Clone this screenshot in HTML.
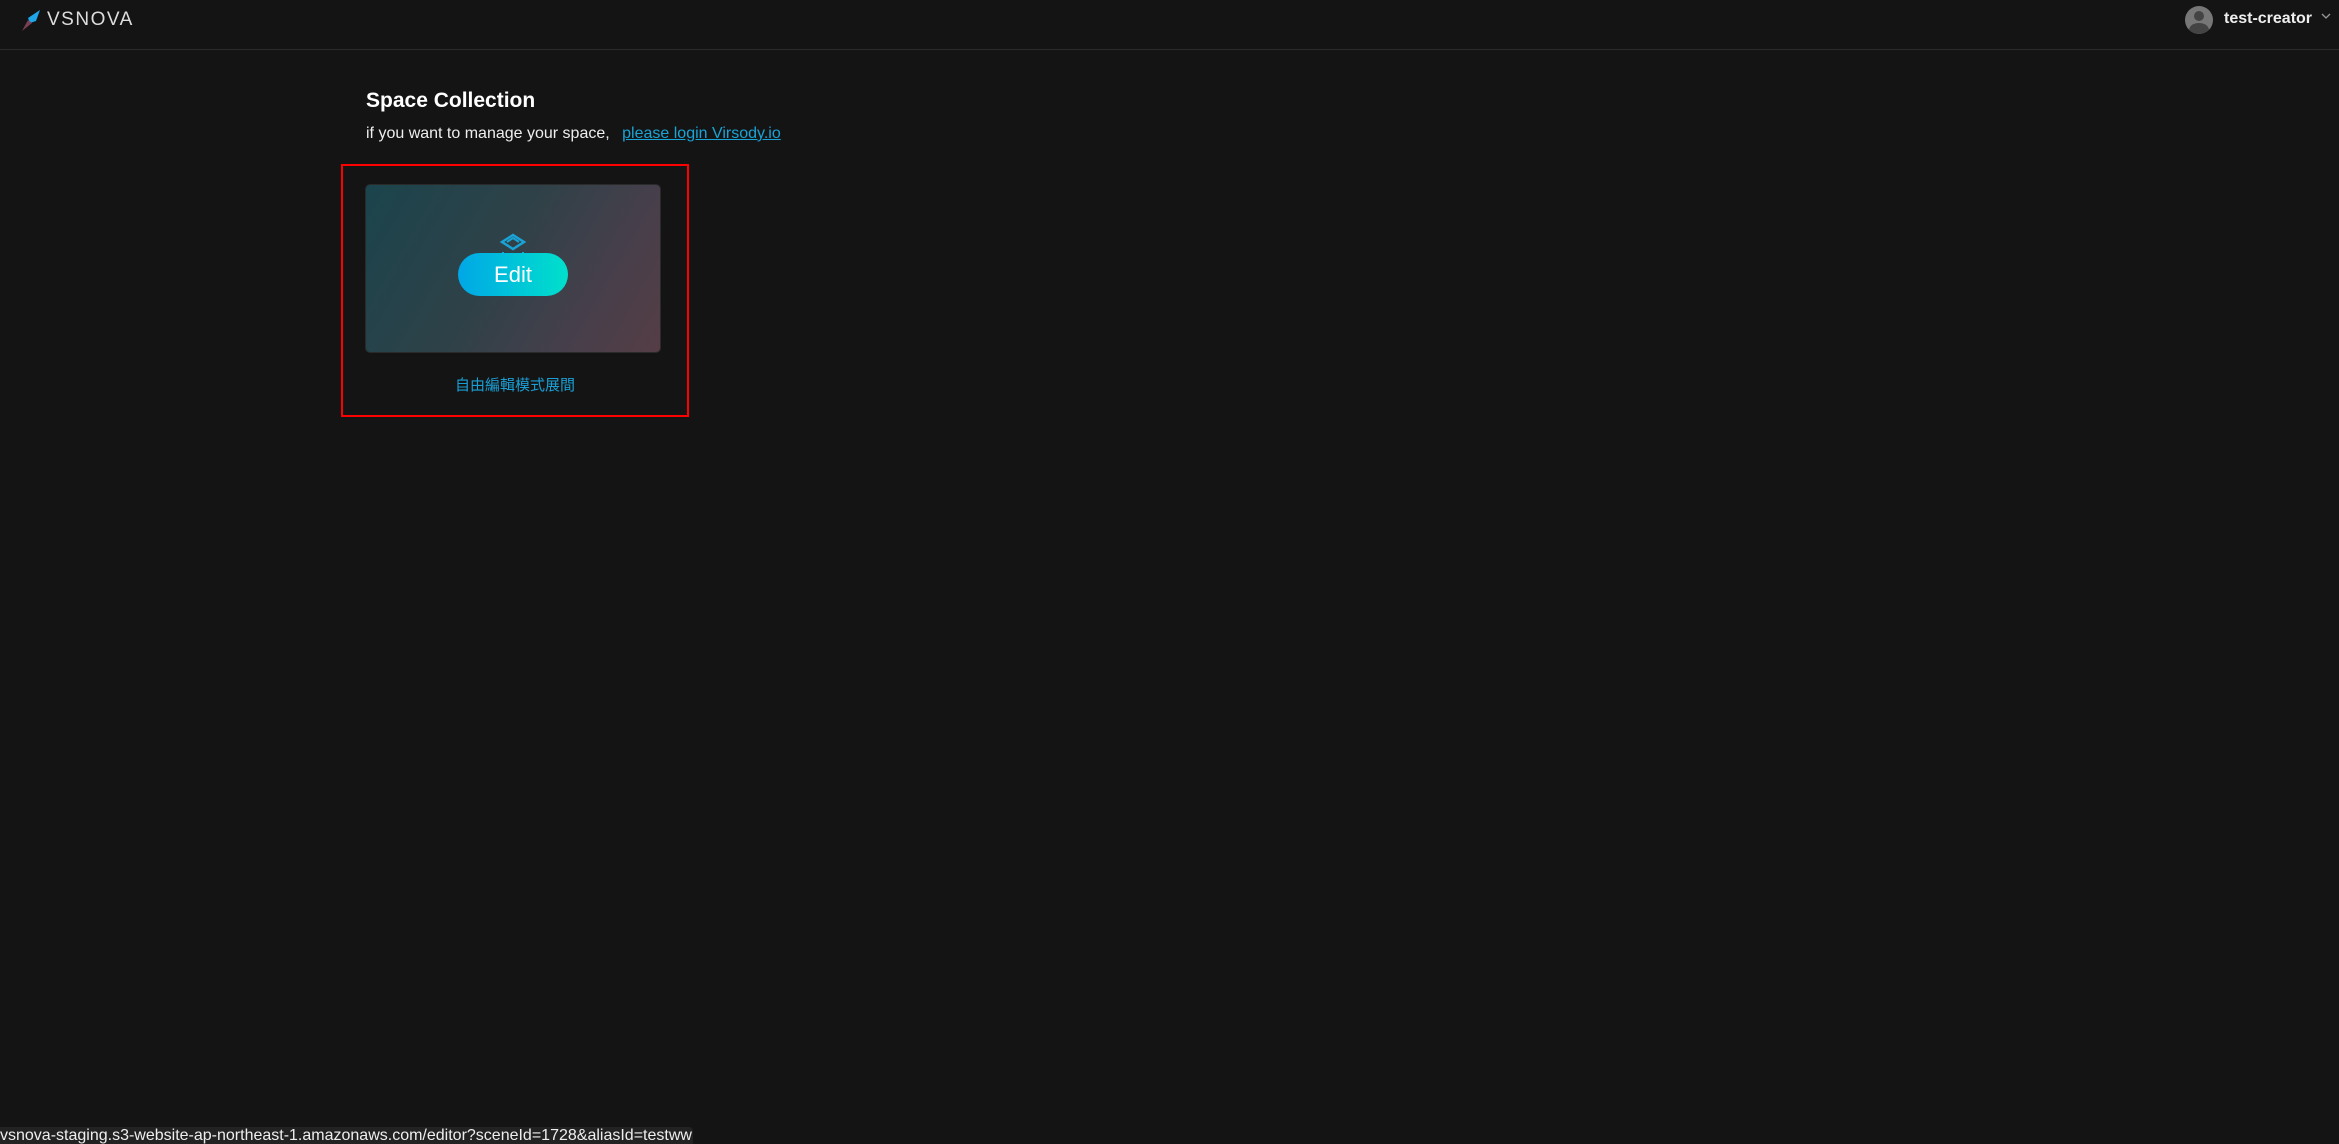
<!DOCTYPE html>
<html><head><meta charset="utf-8"><style>
html,body{margin:0;padding:0;background:#141414;width:2339px;height:1144px;overflow:hidden;font-family:"Liberation Sans","Noto Sans CJK TC",sans-serif;color:#fff}
.hdr{position:absolute;left:0;top:0;width:2339px;height:49px;border-bottom:1px solid #2c2c2c}
.logo{position:absolute;left:22px;top:10px}
.logotxt{position:absolute;left:47px;top:9px;font-size:19px;letter-spacing:1.5px;color:#ddd;font-weight:300}
.av{position:absolute;left:2185px;top:6px;width:28px;height:28px;border-radius:50%;background:#777;overflow:hidden}
.user{position:absolute;left:2224px;top:10px;font-size:16px;font-weight:bold;color:#eee}
.chev{position:absolute;left:2321px;top:12px}
h1{position:absolute;left:366px;top:89px;margin:0;font-size:21px;font-weight:bold}
.sub{position:absolute;left:366px;top:125px;font-size:16px;color:#eee}
.sub a{color:#1aa3d6;text-decoration:underline;margin-left:8px}
.red{position:absolute;left:341px;top:164px;width:344px;height:249px;border:2px solid #f00}
.card{position:absolute;left:366px;top:185px;width:294px;height:167px;border-radius:4px;background:linear-gradient(120deg,#1b444c 0%,#2f4148 45%,#463f4b 75%,#553d45 100%);box-shadow:0 0 0 1px #2a2a2a}
.edit{position:absolute;left:458px;top:253px;width:110px;height:43px;border-radius:22px;background:linear-gradient(90deg,#00a7e6,#00e0cc);text-align:center;line-height:43px;font-size:22px;color:#fff}
.cn{position:absolute;left:343px;top:374px;width:344px;text-align:center;font-size:15px;color:#1a9fd4}
.status{position:absolute;left:0;top:1127px;width:693px;height:17px;background:#222;border-radius:0 4px 0 0;font-size:16px;line-height:17px;color:#eee;white-space:nowrap;overflow:hidden}
</style></head><body>
<div class="hdr">
<svg class="logo" width="20" height="22" viewBox="0 0 20 22"><polygon points="18,0 6,8 8,13 14,11" fill="#1ea6e8"/><polygon points="6,10 0,21 10,13" fill="#7a3f55"/></svg>
<div class="logotxt">VSNOVA</div>
<div class="av"><div style="position:absolute;left:9px;top:5px;width:10px;height:10px;border-radius:50%;background:#444"></div><div style="position:absolute;left:4px;top:17px;width:20px;height:14px;border-radius:50%;background:#444"></div></div>
<div class="user">test-creator</div>
<svg class="chev" width="10" height="8" viewBox="0 0 10 8"><path d="M1 2 L5 6 L9 2" stroke="#999" stroke-width="1.3" fill="none"/></svg>
</div>
<h1>Space Collection</h1>
<div class="sub">if you want to manage your space, <a>please login Virsody.io</a></div>
<div class="red"></div>
<div class="card">
<svg style="position:absolute;left:131px;top:48px" width="32" height="24" viewBox="0 0 32 24"><path d="M16 2 L27 9 L16 16 L5 9 Z" stroke="#1aa3d6" stroke-width="2.5" fill="none"/><path d="M10 9 L16 5 L22 9" stroke="#1aa3d6" stroke-width="2" fill="none"/><path d="M6 19 L6 21 M26 19 L26 21" stroke="#1aa3d6" stroke-width="2"/></svg>
</div>
<div class="edit">Edit</div>
<div class="cn">自由編輯模式展間</div>
<div class="status">vsnova-staging.s3-website-ap-northeast-1.amazonaws.com/editor?sceneId=1728&amp;aliasId=testww</div>
</body></html>
